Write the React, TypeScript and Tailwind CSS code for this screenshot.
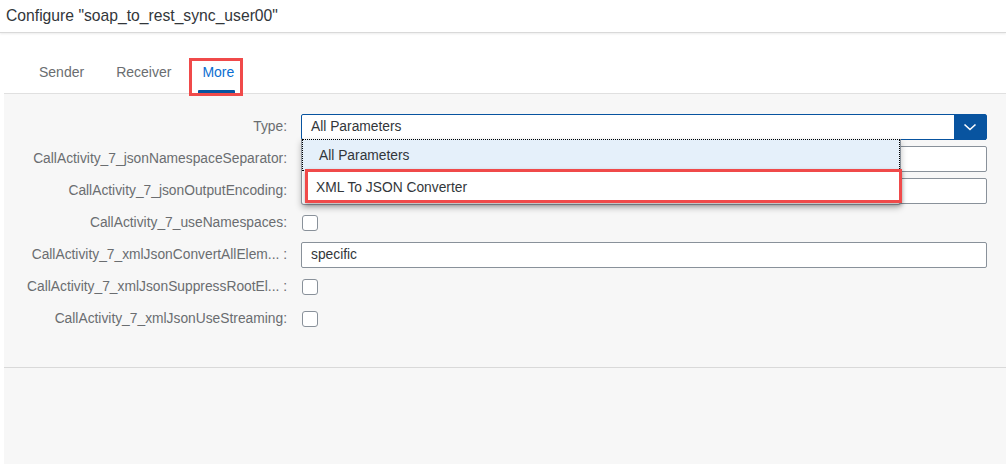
import React from "react";

const font = { fontFamily: '"Liberation Sans", Arial, sans-serif' };

function Row({ label, children }: { label: string; children: React.ReactNode }) {
  return (
    <div className="flex items-center h-[26px]">
      <div className="w-[283px] text-right text-[13.8px] text-[#6a6d70] whitespace-nowrap">{label}</div>
      <div className="ml-[14px] w-[686px] h-[26px] flex items-center">{children}</div>
    </div>
  );
}

function Input({ value }: { value?: string }) {
  return (
    <div className="w-full h-[26px] bg-white border border-[#89919a] rounded-[2px] flex items-center pl-[9px] text-[13.8px] text-[#32363a]">
      {value}
    </div>
  );
}

function Check() {
  return <div className="ml-px w-[16px] h-[16px] bg-white border border-[#89919a] rounded-[3px]" />;
}

export default function App() {
  return (
    <div style={font} className="w-[1006px] h-[465px] bg-white relative overflow-hidden">
      <div className="h-[33px] border-b border-[#d9d9d9] shadow-[0_1px_2px_rgba(0,0,0,0.08)] flex items-center pl-[6px] text-[15.7px] text-[#32363a]">
        Configure "soap_to_rest_sync_user00"
      </div>
      <div className="h-[60px] flex items-start pl-[39px] pt-[30px] text-[14px] leading-[18px] text-[#6a6d70] relative">
        <div>Sender</div>
        <div className="ml-[32px]">Receiver</div>
        <div className="ml-[31px] text-[#0a6ed1]">More</div>
        <div className="absolute left-[198px] top-[57px] w-[37px] h-[3px] bg-[#0854a0] rounded-t-[1px]" />
      </div>
      <div className="ml-[4px] h-[371px] bg-[#f7f7f7] border-t border-[#e0e0e0] flex flex-col">
        <div className="pt-[20px] flex flex-col gap-[6px] relative">
          <Row label="Type:">
            <div className="w-full h-[26px] bg-white border border-[#0854a0] rounded-[2px] flex items-center">
              <div className="flex-1 pl-[9px] text-[13.8px] text-[#32363a]">All Parameters</div>
              <div className="w-[32px] h-[25px] bg-[#0854a0] flex items-center justify-center">
                <svg width="14" height="8" viewBox="0 0 14 8" fill="none">
                  <path d="M1.5 1.5 L7 6.5 L12.5 1.5" stroke="white" strokeWidth="1.6" />
                </svg>
              </div>
            </div>
          </Row>
          <Row label="CallActivity_7_jsonNamespaceSeparator:">
            <Input />
          </Row>
          <Row label="CallActivity_7_jsonOutputEncoding:">
            <Input />
          </Row>
          <Row label="CallActivity_7_useNamespaces:">
            <Check />
          </Row>
          <Row label="CallActivity_7_xmlJsonConvertAllElem... :">
            <Input value="specific" />
          </Row>
          <Row label="CallActivity_7_xmlJsonSuppressRootEl... :">
            <Check />
          </Row>
          <Row label="CallActivity_7_xmlJsonUseStreaming:">
            <Check />
          </Row>

          <div className="absolute left-[297px] top-[45px] w-[600px] bg-white border border-[#89919a] border-t-0 rounded-b-[3px] shadow-[0_3px_6px_rgba(0,0,0,0.25)] text-[13.8px] text-[#32363a]">
            <div className="h-[32px] bg-[#e5f0fa] border border-dotted border-black flex items-center pl-[16px] pt-[2px]">
              All Parameters
            </div>
            <div className="h-[33px] flex items-center pl-[14px] pt-[2px]">XML To JSON Converter</div>
          </div>
          <div className="absolute left-[301px] top-[75px] w-[597px] h-[34px] border-[3px] border-[#f04a4a] shadow-[0_2px_4px_rgba(0,0,0,0.3)]" />
        </div>
        <div className="mt-auto h-[97px] border-t border-[#d9d9d9]" />
      </div>
      <div className="absolute left-[189px] top-[58px] w-[54px] h-[38px] border-[3px] border-[#f04a4a]" />
    </div>
  );
}
